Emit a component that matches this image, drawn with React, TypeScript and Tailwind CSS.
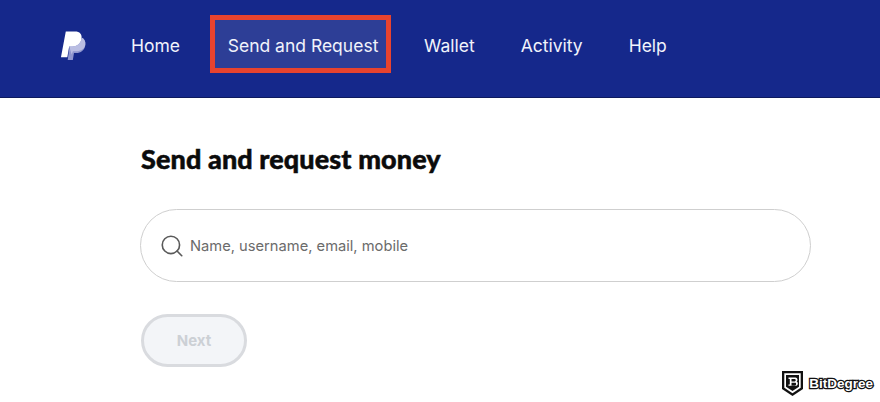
import { Search } from "lucide-react";

const navItems = ["Wallet", "Activity", "Help"];

function PayPalMark() {
  return (
    <svg width="28" height="34" viewBox="0 0 28 34" aria-hidden="true">
      <path d="M11 8h8.500c5 0 7.500 3 6.700 7.500-.9 5-4.600 7.800-9.400 7.800h-2.300l-1.200 7.200H8z" fill="#8f96cf" />
      <path d="M6 1h9.500c5 0 7.600 2.800 6.800 7.400-.9 5.100-4.700 8-9.600 8H9.500L7.600 27.500H1z" fill="#ffffff" />
      <path d="M9.600 16.400h3.100c4.900 0 8.700-2.900 9.600-8 .1-.5.1-.9.1-1.300 2.900 1 4.400 3.900 3.800 7.400-.6 4.300-3.900 6.800-8.200 6.800h-4.600l-1.300 3.500z" fill="#b9bde2" />
    </svg>
  );
}

function BitDegreeBadge() {
  return (
    <div className="absolute right-[7px] bottom-[5px] flex items-center gap-[5px]">
      <svg width="23" height="27" viewBox="0 0 23 27" aria-hidden="true">
        <path d="M1 1h21v18l-10.500 7L1 19z" fill="#111111" />
        <path d="M3.300 3.300h16.400v14.500l-8.200 5.500-8.200-5.500z" fill="#ffffff" />
        <path d="M5 5h13v11.800l-6.500 4.300L5 16.800z" fill="#111111" />
        <path
          fillRule="evenodd"
          d="M7.500 7.500h6.800c1.500 0 2.200 1 2.200 2.300 0 .8-.3 1.400-.9 1.700.8.300 1.200 1 1.200 1.900 0 1.500-.9 2.400-2.400 2.400H7.500v-1.400h1.300V9H7.500zM10.500 9v2.500h3.200c.7 0 1-.5 1-1.200S14.400 9 13.700 9zM10.500 12.700v2.700h3.500c.7 0 1.100-.5 1.100-1.300 0-.9-.4-1.400-1.100-1.400z"
          fill="#ffffff"
        />
      </svg>
      <span className="font-['Liberation_Sans',sans-serif] text-[13.5px] leading-none font-bold text-white [-webkit-text-stroke:2.500px_#111111] [paint-order:stroke_fill]">
        BitDegree
      </span>
    </div>
  );
}

export default function App() {
  return (
    <div className="relative h-[402px] w-[880px] overflow-hidden bg-white font-['Inter',sans-serif]">
      <header className="flex h-[98px] items-center border-b border-[#0d1a5e] bg-[#15288b] pb-[4px] pl-[60px] text-[17.5px] text-[#f1f3fb]">
        <div className="mr-[44px] flex w-[27px] justify-center">
          <PayPalMark />
        </div>
        <a className="mr-[30px]">Home</a>
        <a className="mr-[33px] -mt-[6px] flex h-[58px] w-[181px] items-center justify-center border-[5px] border-[#e8432e] bg-[#2d3e96] pt-[5px] pl-[5px]">
          Send and Request
        </a>
        <nav className="flex gap-[46px]">
          {navItems.map((item) => (
            <a key={item}>{item}</a>
          ))}
        </nav>
      </header>

      <main className="pt-[45px] pl-[140px]">
        <h1 className="ml-[1px] font-['Lato',sans-serif] text-[27px] leading-[32px] font-black tracking-[0.1px] text-[#0b0b0b] [-webkit-text-stroke:0.5px_#0b0b0b]">
          Send and request money
        </h1>

        <div className="mt-[34px] flex h-[73px] w-[671px] items-center gap-[5px] rounded-full border border-[#cfcfcf] bg-white pl-[18px]">
          <Search size={26} strokeWidth={1.500} className="text-[#5a5a5a]" />
          <span className="pt-[2px] text-[14.7px] text-[#6b6b6b]">Name, username, email, mobile</span>
        </div>

        <button
          type="button"
          disabled
          className="mt-[32px] ml-[1px] flex h-[53px] w-[106px] items-center justify-center rounded-full border-[3px] border-[#d9dbdf] bg-[#f3f5f8] pt-[2px] text-[15px] font-bold text-[#ccd0d5]"
        >
          Next
        </button>
      </main>

      <BitDegreeBadge />
    </div>
  );
}
